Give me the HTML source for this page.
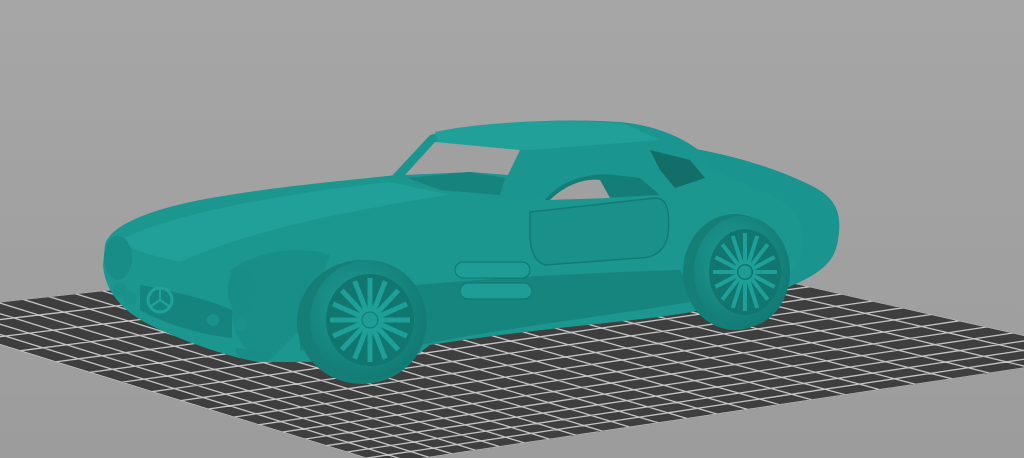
<!DOCTYPE html>
<html><head><meta charset="utf-8"><style>
html,body{margin:0;padding:0;width:1024px;height:458px;overflow:hidden;background:#a2a2a2}
svg{display:block}
</style></head><body>
<svg id="s" width="1024" height="458" viewBox="0 0 1024 458" xmlns="http://www.w3.org/2000/svg">
<defs>
<linearGradient id="bg" x1="0" y1="0" x2="0" y2="1"><stop offset="0" stop-color="#a6a6a6"/><stop offset="1" stop-color="#9c9c9c"/></linearGradient>
<clipPath id="gc"><polygon points="0,302 591,237 1111,355 1024,368 385,464 0,345"/></clipPath>
<radialGradient id="tire" cx="0.4" cy="0.4" r="0.7"><stop offset="0" stop-color="#1d9d95"/><stop offset="1" stop-color="#117670"/></radialGradient>
</defs>
<rect width="1024" height="458" fill="url(#bg)"/>
<g clip-path="url(#gc)">
<rect width="1024" height="458" fill="#3e3e3e"/>
<g id="grid" stroke="#c4c4c4" stroke-width="1.3" fill="none"></g>
</g>
<g>
<path d="M600,140 C680,140 760,160 810,185 C838,198 842,215 838,240 C835,262 820,272 800,282 L760,300 L700,300 L690,250 Z" fill="#1a948e"/>
<path d="M105,245 C110,225 150,210 200,200 C280,185 360,180 420,172 L520,160 L600,158 L700,165 L760,190 C800,205 810,230 800,260 L780,290 L700,310 C660,320 560,325 430,345 L410,360 L300,362 L260,362 C230,358 180,340 150,325 C120,310 105,290 103,265 Z" fill="#1b978f"/>
<path d="M120,240 C170,215 270,195 390,182 L450,195 C350,210 250,230 180,262 C150,255 130,250 120,240 Z" fill="#22a39b" opacity="0.8"/>
<path d="M390,178 L430,135 C480,122 560,118 620,122 C660,126 690,140 710,160 L700,180 L600,190 L520,200 L440,190 Z" fill="#1b958f"/>
<path d="M435,132 C480,122 560,118 625,124 L660,140 L530,150 L440,150 Z" fill="#20a098"/>
<path d="M405,175 L435,142 L520,150 L508,175 L470,172 Z" fill="#a0a0a0"/>
<path d="M408,178 L470,172 L505,178 L500,195 L440,190 Z" fill="#16837d"/>
<path d="M545,200 C560,180 590,172 615,175 L640,178 L660,195 L560,200 Z" fill="#157d77"/>
<path d="M550,200 C565,185 585,178 600,180 L610,198 Z" fill="#a0a0a0"/>
<path d="M650,150 L690,160 L705,178 L675,188 L660,170 Z" fill="#136d68"/>
<path d="M530,212 L655,198 C668,198 670,212 668,235 C665,250 655,258 640,258 L545,265 C535,262 530,250 530,235 Z" fill="#19908a" stroke="#147a74" stroke-width="1.5"/>
<path d="M300,300 C380,285 520,275 680,270 L700,300 C620,315 520,325 420,345 L410,355 L300,350 Z" fill="#16857e"/>
<rect x="455" y="262" width="75" height="16" rx="8" fill="#1d9d96" stroke="#12756e"/>
<rect x="460" y="283" width="72" height="16" rx="8" fill="#1d9d96" stroke="#12756e"/>
<path d="M230,270 C260,250 300,245 330,255 L300,330 L270,360 C245,355 235,340 232,315 Z" fill="#188e88"/>
<ellipse cx="118" cy="258" rx="14" ry="22" fill="#188d87"/>
<ellipse cx="242" cy="290" rx="14" ry="24" fill="#188d87"/>
<path d="M140,285 C170,290 210,300 232,310 L232,338 C200,335 160,322 140,310 Z" fill="#15847e"/>
<circle cx="160" cy="300" r="12" fill="none" stroke="#20a199" stroke-width="3"/>
<path d="M160,288 L160,300 L150,307 M160,300 L170,307" stroke="#20a199" stroke-width="2" fill="none"/>
<circle cx="120" cy="290" r="7" fill="#1a928c"/><circle cx="130" cy="298" r="7" fill="#1a928c"/>
<circle cx="213" cy="320" r="6" fill="#1a928c"/><circle cx="240" cy="325" r="6" fill="#1a928c"/>
<path d="M235,348 L270,352 L268,362 L238,358 Z" fill="#188d87"/>
<ellipse cx="362" cy="322" rx="65" ry="62" fill="#147e77"/>
<ellipse cx="368" cy="320" rx="58" ry="60" fill="url(#tire)"/>
<ellipse cx="370" cy="320" rx="44" ry="46" fill="#117670"/>
<g id="sp1" stroke="#1e9f98" stroke-width="5"></g>
<circle cx="370" cy="320" r="8" fill="#1d9d96" stroke="#117670"/>
<ellipse cx="735" cy="272" rx="52" ry="58" fill="#147e77"/>
<ellipse cx="742" cy="272" rx="48" ry="56" fill="url(#tire)"/>
<ellipse cx="745" cy="272" rx="36" ry="43" fill="#117670"/>
<g id="sp2" stroke="#1e9f98" stroke-width="4"></g>
<circle cx="745" cy="272" r="7" fill="#1d9d96" stroke="#117670"/>
</g>
</svg>
<script>
(function(){
var P=[[591,237],[-102,313],[385,464],[1111,355]];
function H(u,v){
 var w0=(1-u)*(1-v)*0.75, w1=u*(1-v)*0.9, w2=u*v*1.4, w3=(1-u)*v*1.0;
 var s=w0+w1+w2+w3;
 return [(P[0][0]*w0+P[1][0]*w1+P[2][0]*w2+P[3][0]*w3)/s,(P[0][1]*w0+P[1][1]*w1+P[2][1]*w2+P[3][1]*w3)/s];
}
var g=document.getElementById('grid'),ns='http://www.w3.org/2000/svg',d='';
var N1=24,N2=17;
for(var i=0;i<=N1;i++){var u=i/N1;d+='M';for(var k=0;k<=20;k++){var p=H(u,k/20);d+=(k?' L':'')+p[0].toFixed(1)+','+p[1].toFixed(1);}}
for(var j=0;j<=N2;j++){var v=j/N2;d+=' M';for(var k=0;k<=20;k++){var p=H(k/20,v);d+=(k?' L':'')+p[0].toFixed(1)+','+p[1].toFixed(1);}}
var pa=document.createElementNS(ns,'path');pa.setAttribute('d',d);g.appendChild(pa);
function sp(id,cx,cy,rx,ry){var e=document.getElementById(id),s='';for(var a=0;a<16;a++){var t=a*Math.PI/8;s+='M'+(cx+Math.cos(t)*8)+','+(cy+Math.sin(t)*8)+' L'+(cx+Math.cos(t)*rx)+','+(cy+Math.sin(t)*ry)+' ';}
var q=document.createElementNS(ns,'path');q.setAttribute('d',s);e.appendChild(q);}
sp('sp1',370,320,40,42);sp('sp2',745,272,32,39);
})();
</script>
</body></html>
